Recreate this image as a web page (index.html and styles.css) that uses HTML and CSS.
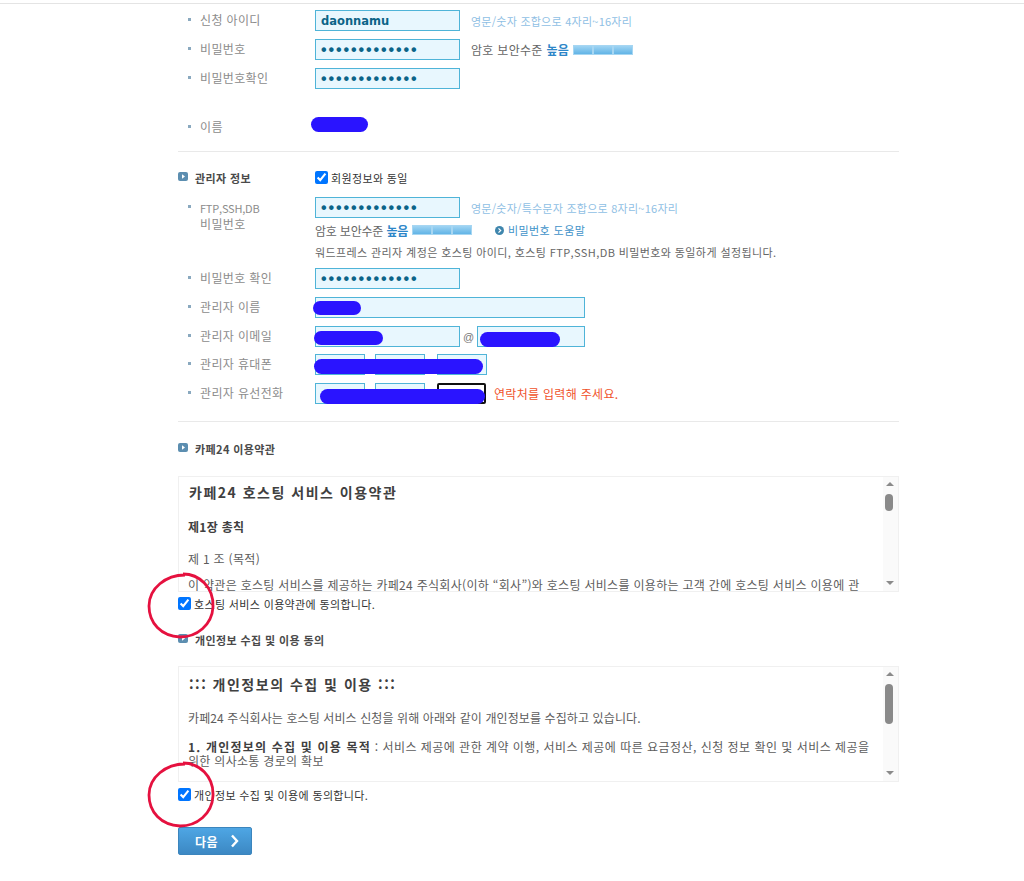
FILE: index.html
```html
<!DOCTYPE html>
<html lang="ko">
<head>
<meta charset="utf-8">
<title>호스팅 신청</title>
<link rel="stylesheet" href="styles.css">
</head>
<body>
<div class="page">
  <div class="topline"></div>
  <main class="content">
    <div class="row"><div class="label"><span class="dot"></span>신청 아이디</div><input class="field w145 strong" value="daonnamu"><span class="hint">영문/숫자 조합으로 4자리~16자리</span></div>
    <div class="row"><div class="label"><span class="dot"></span>비밀번호</div><input class="field w145 pw" type="password" value="1234567890123"><span class="plain">암호 보안수준 <b class="level">높음</b></span><span class="meter"><i></i><i></i><i></i></span></div>
    <div class="row"><div class="label"><span class="dot"></span>비밀번호확인</div><input class="field w145 pw" type="password" value="1234567890123"></div>
    <div class="row row-name"><div class="label label-name"><span class="dot"></span>이름</div></div>
    <hr class="rule rule-a">

    <div class="title-row title-admin"><h2 class="title title-fixed"><span class="sq"><svg viewBox="0 0 10 9" width="10" height="9"><path d="M4 2.2 L7 4.5 L4 6.8Z" fill="#fff"/></svg></span>관리자 정보</h2><label class="check"><input type="checkbox" checked>회원정보와 동일</label></div>
    <div class="row row-ftp">
      <div class="label label-two"><span class="dot dot-top"></span><span class="latin">FTP,SSH,DB</span><br>비밀번호</div>
      <div class="stack">
        <div class="inline"><input class="field w145 pw" type="password" value="1234567890123"><span class="hint">영문/숫자/특수문자 조합으로 8자리~16자리</span></div>
        <div class="inline inline-help"><span class="plain plain-flush plain-tight">암호 보안수준 <b class="level">높음</b></span><span class="meter"><i></i><i></i><i></i></span><span class="help"><svg viewBox="0 0 9 9" width="9" height="9"><circle cx="4.5" cy="4.5" r="4.5" fill="#3f86ad"/><path d="M3.5 2.4 L5.7 4.5 L3.5 6.6" fill="none" stroke="#fff" stroke-width="1.2"/></svg>비밀번호 도움말</span></div>
        <div class="inline inline-note"><span class="plain plain-flush note">워드프레스 관리자 계정은 호스팅 아이디, 호스팅 FTP,SSH,DB 비밀번호와 동일하게 설정됩니다.</span></div>
      </div>
    </div>
    <div class="row"><div class="label"><span class="dot"></span>비밀번호 확인</div><input class="field w145 pw" type="password" value="1234567890123"></div>
    <div class="row"><div class="label"><span class="dot"></span>관리자 이름</div><input class="field w270"></div>
    <div class="row row-mail"><div class="label"><span class="dot"></span>관리자 이메일</div><input class="field w145"><span class="at">@</span><input class="field w108"></div>
    <div class="row"><div class="label"><span class="dot"></span>관리자 휴대폰</div><div class="tel"><input class="field w50"><input class="field w50"><input class="field w50"></div></div>
    <div class="row"><div class="label"><span class="dot"></span>관리자 유선전화</div><div class="tel"><input class="field w50"><input class="field w50"><input class="field w50 focused"></div><span class="error">연락처를 입력해 주세요.</span></div>
    <hr class="rule rule-b">

    <div class="title-row title-terms"><h2 class="title"><span class="sq"><svg viewBox="0 0 10 9" width="10" height="9"><path d="M4 2.2 L7 4.5 L4 6.8Z" fill="#fff"/></svg></span>카페24 이용약관</h2></div>
    <section class="box box-terms">
      <div class="box-text">
        <h3 class="box-h">카페24 호스팅 서비스 이용약관</h3>
        <p class="box-sub"><b>제1장 총칙</b></p>
        <p class="box-art">제 1 조 (목적)</p>
        <p class="box-p">이 약관은 호스팅 서비스를 제공하는 카페24 주식회사(이하 “회사”)와 호스팅 서비스를 이용하는 고객 간에 호스팅 서비스 이용에 관</p>
      </div>
      <div class="sbar"><span class="arrow up"></span><span class="thumb thumb-a"></span><span class="arrow down"></span></div>
    </section>
    <label class="check agree agree-a"><input type="checkbox" checked>호스팅 서비스 이용약관에 동의합니다.</label>

    <div class="title-row title-privacy"><h2 class="title"><span class="sq"><svg viewBox="0 0 10 9" width="10" height="9"><path d="M4 2.2 L7 4.5 L4 6.8Z" fill="#fff"/></svg></span>개인정보 수집 및 이용 동의</h2></div>
    <section class="box">
      <div class="box-text">
        <h3 class="box-h">::: 개인정보의 수집 및 이용 :::</h3>
        <p class="box-intro">카페24 주식회사는 호스팅 서비스 신청을 위해 아래와 같이 개인정보를 수집하고 있습니다.</p>
        <p class="box-purpose"><b>1. 개인정보의 수집 및 이용 목적</b> <span class="purpose-rest">: 서비스 제공에 관한 계약 이행, 서비스 제공에 따른 요금정산, 신청 정보 확인 및 서비스 제공을</span><br>위한 의사소통 경로의 확보</p>
      </div>
      <div class="sbar"><span class="arrow up"></span><span class="thumb thumb-b"></span><span class="arrow down"></span></div>
    </section>
    <label class="check agree agree-b"><input type="checkbox" checked>개인정보 수집 및 이용에 동의합니다.</label>

    <button class="next" type="button">다음<svg viewBox="0 0 9 14" width="9" height="14"><path d="M2 1.5 L7 7 L2 12.5" fill="none" stroke="#fff" stroke-width="2.4"/></svg></button>
  </main>

  <span class="blob b-name"></span>
  <span class="blob b-admin"></span>
  <span class="blob b-mail1"></span>
  <span class="blob b-mail2"></span>
  <span class="blob b-cell"></span>
  <span class="blob b-tel"></span>
  <svg class="ring ring-a" viewBox="0 0 70 70" width="70" height="70"><path d="M36 3 C52 3 67 16 66 36 C65 54 50 66 33 66 C14 65 2 52 2 35 C2 17 19 4 38 4" fill="none" stroke="#e5113f" stroke-width="2.8"/></svg>
  <svg class="ring ring-b" viewBox="0 0 70 70" width="70" height="70"><path d="M36 3 C52 3 67 16 66 36 C65 54 50 66 33 66 C14 65 2 52 2 35 C2 17 19 4 38 4" fill="none" stroke="#e5113f" stroke-width="2.8"/></svg>
</div>
</body>
</html>
```
FILE: styles.css
```css
* { box-sizing: border-box; }
html, body { margin: 0; padding: 0; background: #fff; }
body { font-family: "Noto Sans CJK KR", "Noto Sans", sans-serif; font-size: 11px; color: #666; }
.page { position: relative; width: 1024px; height: 881px; overflow: hidden; }
.topline { height: 4px; border-bottom: 1px solid #e4e4e4; }
.content { width: 721px; margin-left: 178px; padding-top: 6px; }

.row { display: flex; align-items: center; height: 21px; margin-bottom: 8px; }
.row-name { margin-top: 27px; margin-bottom: 0; }
.row-mail { margin-bottom: 7px; }
.row-ftp { height: auto; align-items: flex-start; margin-bottom: 5px; }
.label { width: 137px; flex: none; padding-left: 10px; margin-bottom: 3px; display: flex; align-items: center; color: #8c8c8c; font-size: 12px; letter-spacing: .35px; white-space: nowrap; }
.label-name { margin-bottom: 0; }
.label-two { display: block; padding-left: 22px; position: relative; line-height: 16px; padding-top: 3px; margin-bottom: 0; }
.latin { font-size: 11px; letter-spacing: -.2px; }
.dot { width: 3px; height: 3px; background: #8aa9bf; margin-right: 9px; flex: none; }
.dot-top { position: absolute; left: 10px; top: 8px; margin: 0; }

.field { height: 21px; padding: 0 5px; border: 1px solid #4fb4d8; background: #e8f7fe; border-radius: 0; color: #0b6488; font-family: "Liberation Sans", sans-serif; font-size: 13px; outline: none; }
.w145 { width: 145px; }
.w270 { width: 270px; }
.w108 { width: 108px; }
.w50 { width: 50px; }
.strong { font-weight: 700; font-family: "DejaVu Sans", sans-serif; font-size: 11.5px; }
.pw { font-size: 16px; letter-spacing: 1.9px; font-weight: 700; }
.focused { background: #fff; border: 2px solid #111; border-radius: 2px; width: 49px; }

.hint { margin-left: 11px; color: #8fc0e4; letter-spacing: .25px; white-space: nowrap; }
.plain { margin-left: 11px; color: #666; font-size: 12px; letter-spacing: .3px; white-space: nowrap; }
.plain-flush { margin-left: 0; }
.plain-tight { letter-spacing: -.2px; }
.note { font-size: 11px; letter-spacing: .4px; }
.level { color: #2d86c8; }
.meter { display: flex; margin-left: 4px; }
.meter i { width: 20px; height: 10px; background: linear-gradient(#9fd4f3, #62b4e6); border: 1px solid #a6d6f2; }

.stack { display: flex; flex-direction: column; }
.inline { display: flex; align-items: center; height: 21px; }
.inline-help { height: 22px; margin-top: 1px; }
.inline-note { height: 22px; margin-top: 0; }
.help { display: flex; align-items: center; gap: 4px; margin-left: 23px; color: #3f93c9; letter-spacing: .4px; }

.at { width: 17px; text-align: center; color: #777; font-family: "Liberation Sans", sans-serif; font-size: 11px; }
.tel { display: flex; gap: 10px; width: 171px; flex: none; }
.tel .field + .field + .field { margin-left: 2px; }
.error { margin-left: 8px; color: #f0532b; font-size: 12px; letter-spacing: .3px; white-space: nowrap; }

.rule { margin: 0; border: 0; border-top: 1px solid #e9e9e9; }
.rule-a { margin-top: 14px; }
.rule-b { margin-top: 17px; }

.title-row { display: flex; align-items: center; height: 21px; margin-top: 16px; }
.title-admin { margin-top: 15px; }
.title-terms { margin-top: 16px; }
.title-privacy { margin-top: 15px; }
.title-row + .row { margin-top: 9px; }
.title { display: flex; align-items: center; margin: 0; font-size: 11px; font-weight: 700; color: #4a4a4a; letter-spacing: .4px; white-space: nowrap; }
.title-fixed { width: 137px; }
.sq { display: flex; width: 10px; height: 9px; margin-right: 7px; margin-top: -2px; background: #5c8eb0; border-radius: 2px; }

.check { display: flex; align-items: center; color: #333; font-size: 11px; letter-spacing: .35px; white-space: nowrap; }
.check input { width: 13px; height: 13px; margin: 0 3px 0 0; accent-color: #0075ff; }

.box { display: flex; height: 116px; border: 1px solid #f0f0f0; margin-top: 16px; overflow: hidden; }
.box-terms { margin-top: 17px; }
.box-text { flex: 1; min-width: 0; padding: 0 9px; overflow: hidden; color: #5c5c5c; font-size: 12px; line-height: 14px; letter-spacing: .3px; }
.box-text p { margin: 0; white-space: nowrap; }
.box-h { margin: 8px 0 0 1px; font-size: 14px; line-height: 18px; color: #404040; letter-spacing: 1.5px; }
.box-terms .box-h { margin-top: 6px; }
.box-sub { padding-top: 19px; }
.box-art { padding-top: 18px; }
.box-p { padding-top: 12px; }
.box-intro { padding-top: 18px; letter-spacing: .1px; }
.box-purpose { padding-top: 15px; }
.box-text b { color: #404040; }
.box-purpose b { letter-spacing: 1.2px; }
.purpose-rest { letter-spacing: .47px; }
.sbar { position: relative; flex: none; width: 15px; background: #fafafa; }
.arrow { position: absolute; left: 3px; width: 0; height: 0; border-left: 4px solid transparent; border-right: 4px solid transparent; }
.up { top: 5px; border-bottom: 4px solid #8a8a8a; }
.down { bottom: 6px; border-top: 4px solid #8a8a8a; }
.thumb { position: absolute; left: 2px; width: 8px; background: #8a8a8a; border-radius: 4px; }
.thumb-a { top: 17px; height: 17px; }
.thumb-b { top: 17px; height: 40px; }

.agree { height: 21px; }
.agree-a { margin-top: 1px; }
.agree-b { margin-top: 2px; }
.next { display: flex; align-items: center; justify-content: center; gap: 12px; width: 74px; height: 28px; margin-top: 22px; padding: 0 0 0 4px; border: 1px solid #3b85bd; border-radius: 2px; background: linear-gradient(#4ea6e4, #3c88c3); color: #fff; font-family: inherit; font-size: 12px; font-weight: 700; letter-spacing: .5px; }

.blob { position: absolute; background: #2a14ff; border-radius: 8px; }
.b-name { left: 311px; top: 117px; width: 57px; height: 15px; }
.b-admin { left: 313px; top: 301px; width: 48px; height: 14px; }
.b-mail1 { left: 314px; top: 331px; width: 69px; height: 14px; }
.b-mail2 { left: 480px; top: 332px; width: 80px; height: 15px; }
.b-cell { left: 314px; top: 359px; width: 169px; height: 15px; }
.b-tel { left: 320px; top: 389px; width: 165px; height: 15px; }
.ring { position: absolute; }
.ring-a { left: 147px; top: 571px; }
.ring-b { left: 147px; top: 760px; }
```
